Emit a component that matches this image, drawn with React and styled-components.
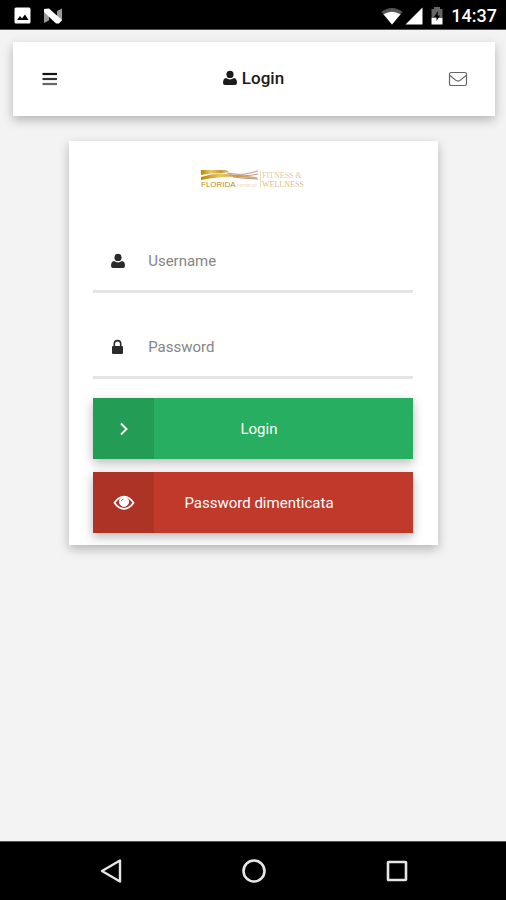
import React from 'react';
import styled, { createGlobalStyle } from 'styled-components';

const GlobalStyle = createGlobalStyle`
  *, *::before, *::after { box-sizing: border-box; }
  body { margin: 0; background: #f3f3f3; font-family: Roboto, sans-serif; }
  button, input { font: inherit; }
`;

const Screen = styled.div`
  min-height: 100vh;
  display: flex;
  flex-direction: column;
  background: #f3f3f3;
`;

const StatusBar = styled.div`
  height: 30px;
  padding: 2px 9px 0 14px;
  display: flex;
  align-items: center;
  justify-content: space-between;
  background: #000;
  border-bottom: 1px solid #555;
  color: #fff;
`;

const StatusGroup = styled.div`
  display: flex;
  align-items: center;
  gap: ${(p) => p.$gap};
`;

const Clock = styled.time`
  font-size: 18px;
  line-height: 24px;
  font-weight: 500;
  padding-top: 1px;
`;

const Header = styled.header`
  margin: 12px 11px 0 13px;
  height: 74px;
  padding: 0 27px 0 28px;
  display: flex;
  align-items: center;
  justify-content: space-between;
  background: #fff;
  box-shadow: 0 4px 10px rgba(0, 0, 0, 0.26);
`;

const IconButton = styled.button`
  display: flex;
  padding: 0;
  border: 0;
  background: none;
  color: #222;
`;

const Title = styled.h1`
  margin: 0;
  padding-bottom: 2px;
  display: flex;
  align-items: center;
  gap: 4px;
  font-size: 17px;
  line-height: 24px;
  font-weight: 500;
  color: #1b1b1b;
`;

const Content = styled.main`
  flex: 1;
  padding: 25px 0 25px 1px;
`;

const Card = styled.form`
  width: 73%;
  margin: 0 auto;
  padding: 25px 25px 12px 24px;
  display: flex;
  flex-direction: column;
  background: #fff;
  box-shadow: 0 4px 10px rgba(0, 0, 0, 0.26);
`;

const Brand = styled.div`
  display: flex;
  align-items: flex-start;
  justify-content: center;
  padding: 3px 0 0 3px;
  height: 30px;
`;

const Field = styled.label`
  height: 62px;
  margin-top: ${(p) => p.$top};
  padding-left: 17px;
  display: flex;
  align-items: center;
  gap: 22px;
  border-bottom: 3px solid #e4e4e4;
  color: #2b2b2b;
`;

const TextInput = styled.input`
  flex: 1;
  min-width: 0;
  padding: 0;
  border: 0;
  outline: 0;
  background: none;
  font-size: 15px;
  line-height: 20px;
  color: #333;
  &::placeholder { color: #858585; opacity: 1; }
`;

const Actions = styled.div`
  margin-top: 19px;
  display: flex;
  flex-direction: column;
  gap: 13px;
`;

const ActionButton = styled.button`
  height: 61px;
  padding: 0;
  border: 0;
  display: grid;
  grid-template-columns: 61px 1fr 49px;
  align-items: stretch;
  background: ${(p) => p.$color};
  color: #fff;
  font-size: 15px;
  line-height: 20px;
  box-shadow: 0 4px 10px rgba(0, 0, 0, 0.28);
`;

const ActionIcon = styled.span`
  display: flex;
  align-items: center;
  justify-content: center;
  background: rgba(0, 0, 0, 0.1);
`;

const ActionText = styled.span`
  align-self: center;
  text-align: center;
  white-space: nowrap;
`;

const NavBar = styled.nav`
  height: 59px;
  padding-left: 1px;
  display: flex;
  align-items: center;
  justify-content: center;
  gap: 118px;
  background: #000;
  border-top: 1px solid #555;
`;

const NavButton = styled(IconButton)`
  color: #e6e6e6;
`;

const UserIcon = () => (
  <svg width="16" height="16" viewBox="0 0 16 16" fill="currentColor" aria-hidden="true">
    <circle cx="8" cy="4.4" r="3.6" />
    <path d="M4 8Q8 10.800 12 8Q15 8.800 15 12.800Q15 15 13 15H3Q1 15 1 12.800Q1 8.800 4 8z" />
  </svg>
);

const LockIcon = () => (
  <svg width="16" height="16" viewBox="0 0 16 16" fill="currentColor" aria-hidden="true">
    <rect x="2" y="7" width="11" height="8" rx="1" />
    <path d="M4.300 8V4.800a3.200 3.200 0 0 1 6.400 0V8" fill="none" stroke="currentColor" strokeWidth="1.600" />
  </svg>
);

const ChevronIcon = () => (
  <svg width="20" height="20" viewBox="0 0 20 20" fill="none" stroke="currentColor" aria-hidden="true">
    <path d="M7 4.500l5.500 5.500L7 15.500" strokeWidth="1.800" />
  </svg>
);

const EyeIcon = () => (
  <svg width="22" height="20" viewBox="0 0 22 20" fill="none" stroke="currentColor" aria-hidden="true">
    <path d="M1.500 9.800Q5.500 3.700 11 3.700T20.500 9.800Q16.500 15.800 11 15.800T1.500 9.800z" strokeWidth="1.800" strokeLinejoin="round" />
    <circle cx="11" cy="8.800" r="4.600" fill="currentColor" strokeWidth="1" />
    <path d="M8.400 8.200Q8.600 6.200 10.600 6" stroke="#c0392b" strokeWidth="0.800" />
  </svg>
);

const MenuIcon = () => (
  <svg width="17" height="16" viewBox="0 0 17 16" aria-hidden="true">
    <path d="M1.500 3h14.500" stroke="#111" strokeWidth="2.200" />
    <path d="M1.500 8h14.500" stroke="#333" strokeWidth="2.200" />
    <path d="M1.500 13h14.500" stroke="#666" strokeWidth="2.200" />
  </svg>
);

const MailIcon = () => (
  <svg width="20" height="16" viewBox="0 0 20 16" fill="none" stroke="#666" aria-hidden="true">
    <rect x="1.500" y="1.500" width="17" height="13" rx="1.800" strokeWidth="1.200" />
    <path d="M2 4.500l5.600 4.600Q10 11 12.400 9.100L18 4.500" strokeWidth="1.200" />
  </svg>
);

const PictureIcon = () => (
  <svg width="17" height="17" viewBox="0 0 17 17" aria-hidden="true">
    <rect x="0.500" y="0.500" width="16" height="16" rx="1.500" fill="#fff" />
    <path d="M3 13l3-4 2 2.500 3-4 3.500 5.500z" fill="#000" />
  </svg>
);

const NougatIcon = () => (
  <svg width="20" height="16" viewBox="0 0 20 16" aria-hidden="true">
    <path d="M1 1.500h5v11L1 15zM14 3l5-2.500V13l-5 1.500z" fill="#999" />
    <path d="M1 1l5-.5L19 12l-3 3.500h-3L1 4z" fill="#fff" />
  </svg>
);

const WifiIcon = () => (
  <svg width="22" height="18" viewBox="0 0 22 18" aria-hidden="true">
    <path d="M.5 5Q11-3 21.500 5L11 17.500z" fill="#555" />
    <path d="M2.500 7.300Q11 2 19.500 7.300L11 17.500z" fill="#fff" />
  </svg>
);

const SignalIcon = () => (
  <svg width="18" height="18" viewBox="0 0 18 18" aria-hidden="true">
    <path d="M17.500.500v17H.500z" fill="#fff" />
  </svg>
);

const BatteryIcon = () => (
  <svg width="12" height="18" viewBox="0 0 12 18" aria-hidden="true">
    <path d="M3 2V0h6v2h2.500v9H.500V2z" fill="#666" />
    <path d="M.500 11h11v6.500H.500z" fill="#fff" />
    <path d="M7 4L3 10h2.500v4L9 8.500H6.500z" fill="#000" />
  </svg>
);

const LogoMark = () => (
  <svg width="106" height="20" viewBox="0 0 106 20" role="img" aria-label="Florida Fitness &amp; Wellness">
    <defs>
      <linearGradient id="gold" x1="0" x2="1">
        <stop offset="0" stopColor="#b9860c" />
        <stop offset="0.35" stopColor="#e6c85f" />
        <stop offset="0.7" stopColor="#c79a45" />
        <stop offset="1" stopColor="#d7bd77" />
      </linearGradient>
    </defs>
    <path d="M0 1h25l3 2Q18 5 10 4.500L0 6z" fill="url(#gold)" />
    <path d="M0 8Q12 4 25 5t31 3v2Q34 7 22 8T0 11z" fill="url(#gold)" />
    <path d="M26 4q12 2 18 1t13-3M28 6q16 2 29-1M32 8q14 2 25 2" fill="none" stroke="#bd9685" strokeWidth="1" />
    <path d="M59.500 2v16" stroke="#ecdfbb" />
    <text x="0" y="18" fontFamily="Liberation Sans, sans-serif" fontSize="8" fill="#b98b10">FLORIDA</text>
    <text x="36" y="18" fontFamily="Liberation Serif, serif" fontSize="5" fill="#dfd2ba">FITNESS</text>
    <text x="61" y="9" fontFamily="Liberation Serif, serif" fontSize="8" fill="#dccb9b">FITNESS &amp;</text>
    <text x="61" y="18" fontFamily="Liberation Serif, serif" fontSize="8" fill="#d4bf85">WELLNESS</text>
  </svg>
);

const BackIcon = () => (
  <svg width="24" height="26" viewBox="0 0 24 26" fill="none" stroke="currentColor" strokeWidth="2.400" aria-hidden="true">
    <path d="M21 2.500v21L3 13z" strokeLinejoin="round" />
  </svg>
);

const HomeIcon = () => (
  <svg width="26" height="26" viewBox="0 0 26 26" fill="none" stroke="currentColor" strokeWidth="2.600" aria-hidden="true">
    <circle cx="13" cy="13" r="10.500" />
  </svg>
);

const RecentIcon = () => (
  <svg width="24" height="26" viewBox="0 0 24 26" fill="none" stroke="currentColor" strokeWidth="2.600" aria-hidden="true">
    <rect x="3" y="4" width="18" height="18" rx="0.500" />
  </svg>
);

export default function App() {
  return (
    <Screen>
      <GlobalStyle />
      <StatusBar>
        <StatusGroup $gap="12px">
          <PictureIcon />
          <NougatIcon />
        </StatusGroup>
        <StatusGroup $gap="8px">
          <StatusGroup $gap="2px">
            <WifiIcon />
            <SignalIcon />
          </StatusGroup>
          <BatteryIcon />
          <Clock>14:37</Clock>
        </StatusGroup>
      </StatusBar>
      <Header>
        <IconButton type="button" aria-label="Menu"><MenuIcon /></IconButton>
        <Title><UserIcon />Login</Title>
        <IconButton type="button" aria-label="Messages"><MailIcon /></IconButton>
      </Header>
      <Content>
        <Card onSubmit={(e) => e.preventDefault()}>
          <Brand><LogoMark /></Brand>
          <Field $top="35px">
            <UserIcon />
            <TextInput type="text" placeholder="Username" aria-label="Username" />
          </Field>
          <Field $top="24px">
            <LockIcon />
            <TextInput type="password" placeholder="Password" aria-label="Password" />
          </Field>
          <Actions>
            <ActionButton type="submit" $color="#27ae60">
              <ActionIcon><ChevronIcon /></ActionIcon>
              <ActionText>Login</ActionText>
            </ActionButton>
            <ActionButton type="button" $color="#c0392b">
              <ActionIcon><EyeIcon /></ActionIcon>
              <ActionText>Password dimenticata</ActionText>
            </ActionButton>
          </Actions>
        </Card>
      </Content>
      <NavBar>
        <NavButton type="button" aria-label="Back"><BackIcon /></NavButton>
        <NavButton type="button" aria-label="Home"><HomeIcon /></NavButton>
        <NavButton type="button" aria-label="Recent apps"><RecentIcon /></NavButton>
      </NavBar>
    </Screen>
  );
}
